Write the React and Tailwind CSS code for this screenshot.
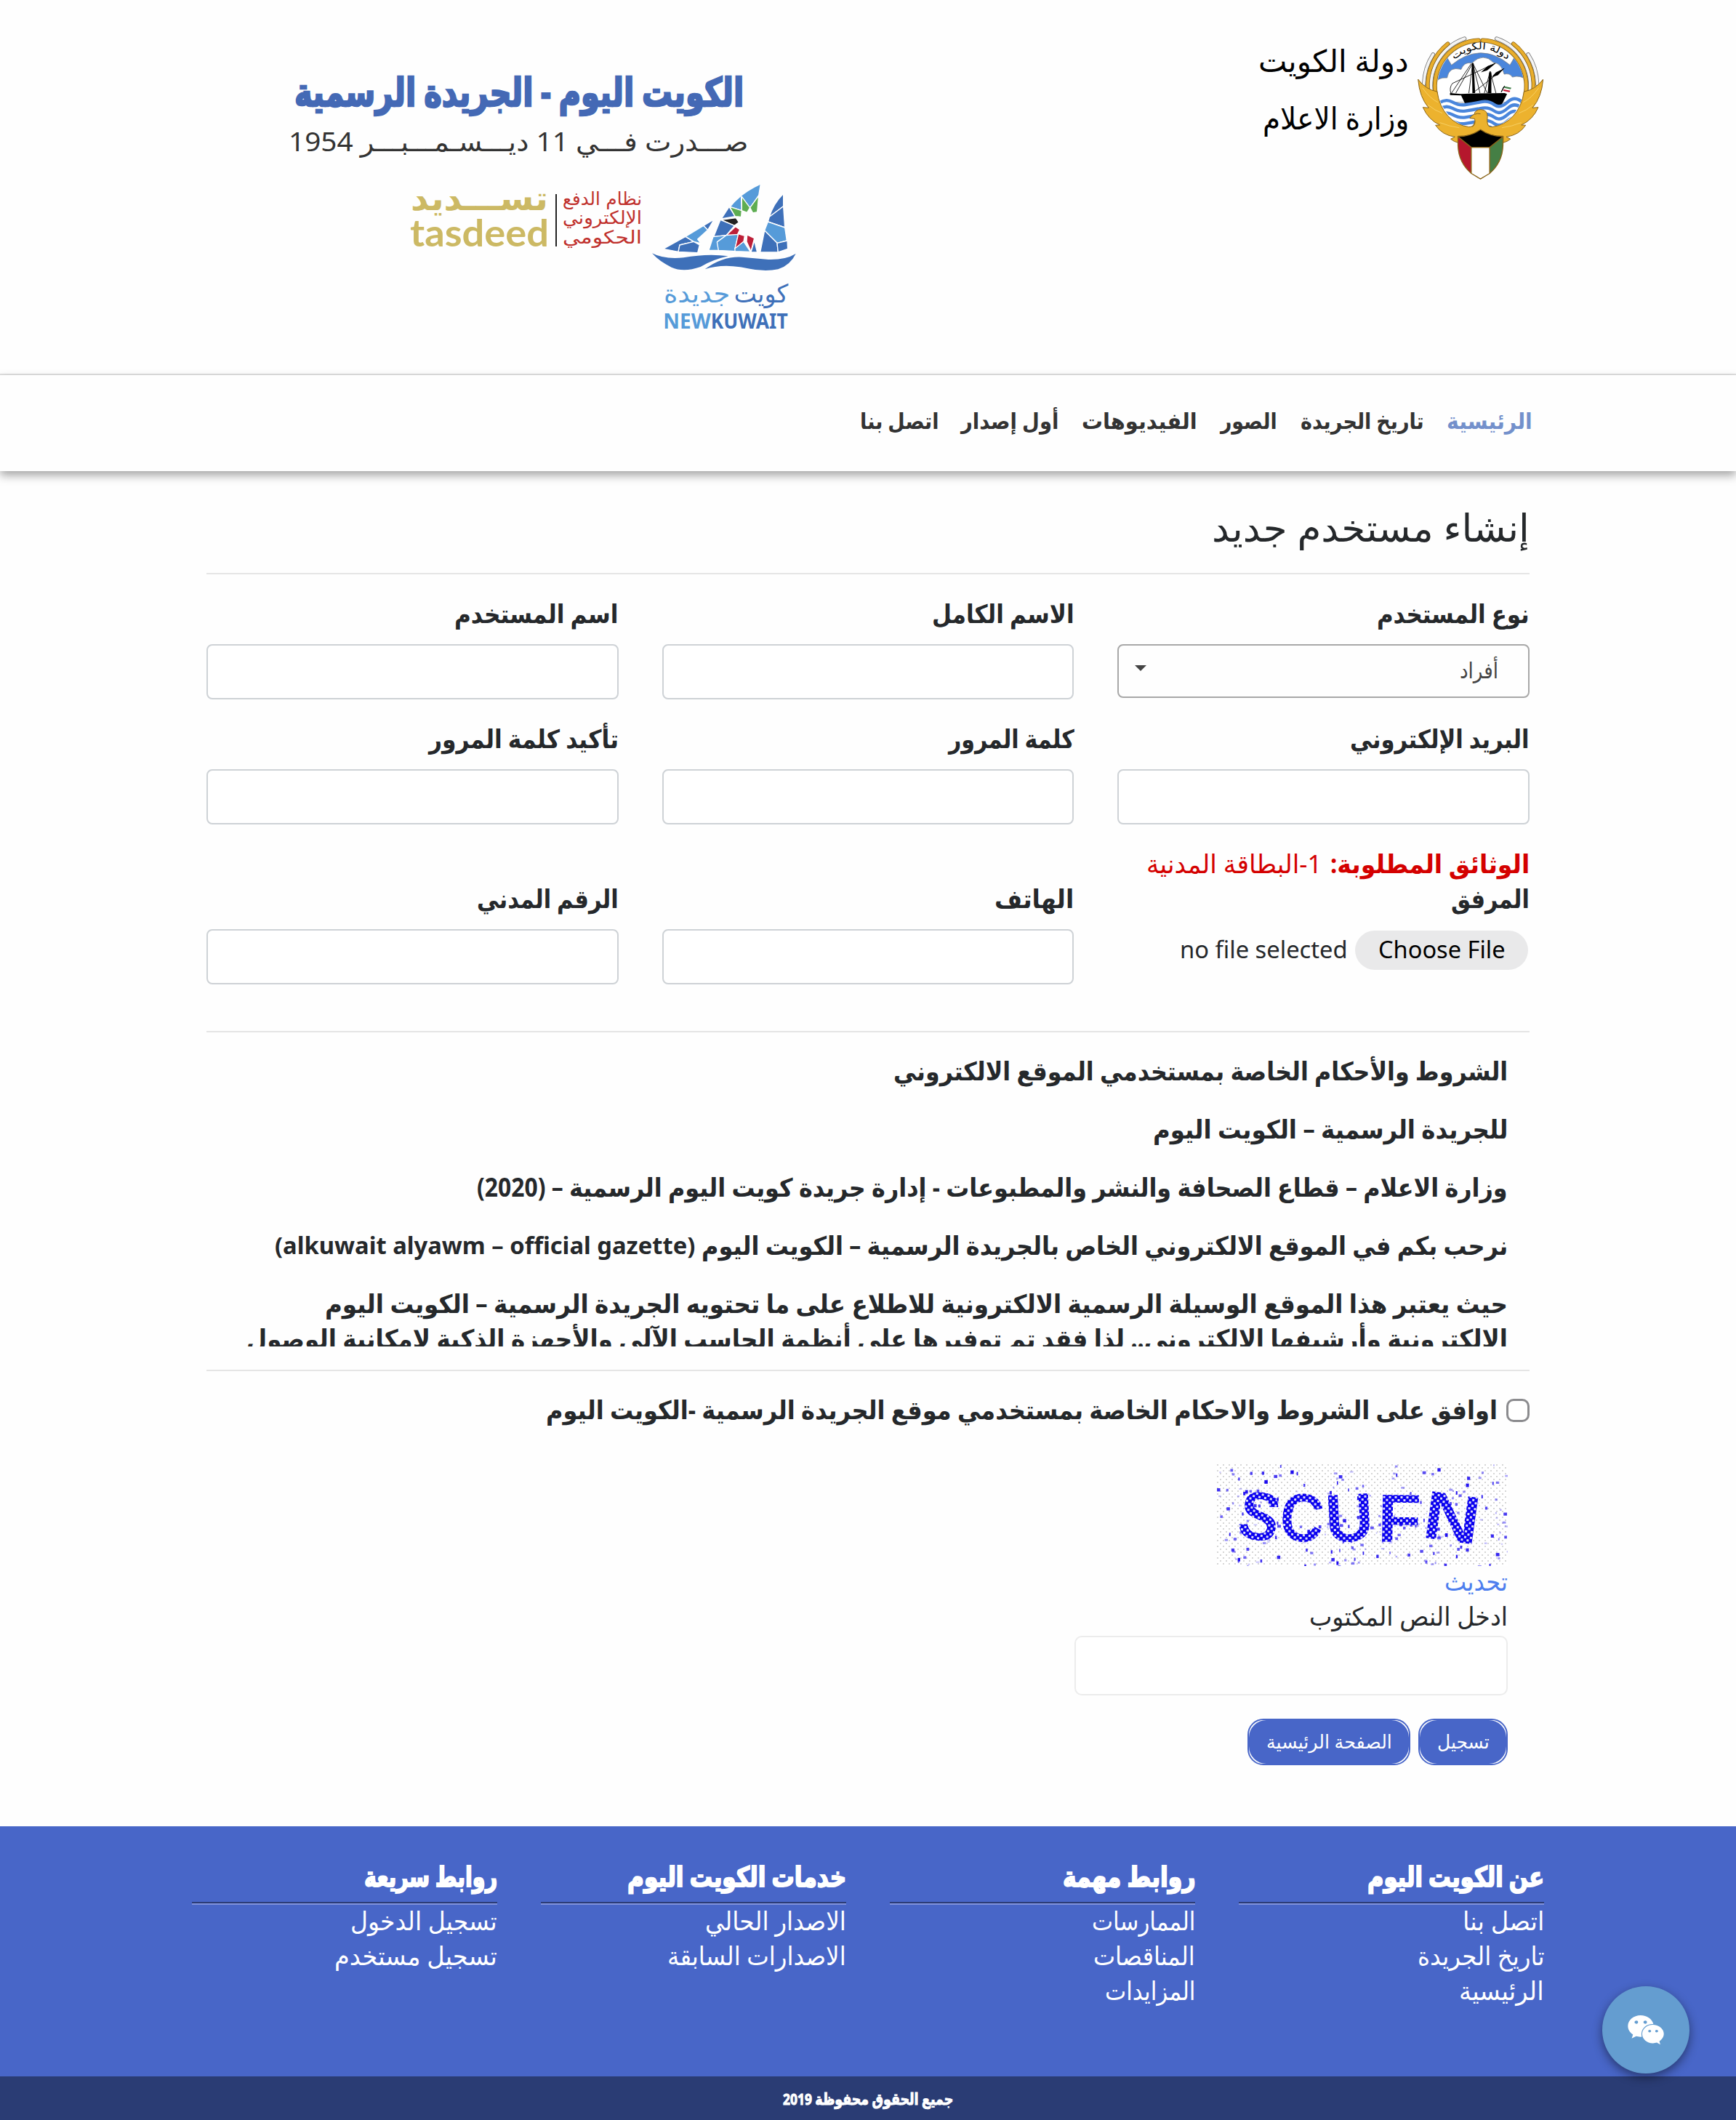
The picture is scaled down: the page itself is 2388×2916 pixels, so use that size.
import { useLayoutEffect, useRef, useState } from "react";
import { FaWeixin } from "react-icons/fa";

// Squeezes or stretches one line of text so it fills the width given in className
function Fit({ className = "", children }) {
  const outer = useRef(null);
  const inner = useRef(null);
  const [scale, setScale] = useState(1);

  useLayoutEffect(() => {
    setScale(outer.current.clientWidth / inner.current.offsetWidth);
  }, [children]);

  return (
    <span ref={outer} className={`inline-flex whitespace-nowrap ${className}`}>
      <span ref={inner} className="inline-block shrink-0 origin-right" style={{ transform: `scaleX(${scale})` }}>
        {children}
      </span>
    </span>
  );
}

const navItems = [
  { label: "الرئيسية", width: "w-[118px]", active: true },
  { label: "تاريخ الجريدة", width: "w-[170px]" },
  { label: "الصور", width: "w-[78px]" },
  { label: "الفيديوهات", width: "w-[159px]" },
  { label: "أول إصدار", width: "w-[134px]" },
  { label: "اتصل بنا", width: "w-[108px]" },
];

const footerColumns = [
  {
    title: "عن الكويت اليوم",
    width: "w-[243px]",
    links: [
      { label: "اتصل بنا", width: "w-[112px]" },
      { label: "تاريخ الجريدة", width: "w-[174px]" },
      { label: "الرئيسية", width: "w-[117px]" },
    ],
  },
  {
    title: "روابط مهمة",
    width: "w-[183px]",
    links: [
      { label: "الممارسات", width: "w-[142px]" },
      { label: "المناقصات", width: "w-[140px]" },
      { label: "المزايدات", width: "w-[124px]" },
    ],
  },
  {
    title: "خدمات الكويت اليوم",
    width: "w-[301px]",
    links: [
      { label: "الاصدار الحالي", width: "w-[194px]" },
      { label: "الاصدارات السابقة", width: "w-[246px]" },
    ],
  },
  {
    title: "روابط سريعة",
    width: "w-[183px]",
    links: [
      { label: "تسجيل الدخول", width: "w-[202px]" },
      { label: "تسجيل مستخدم", width: "w-[224px]" },
    ],
  },
];

const wave = (y) =>
  `M118 ${y} Q146 ${y - 18} 172 ${y - 3} T226 ${y + 8} T288 ${y - 3} T345 ${y + 8} T400 ${y - 3} T462 ${y}`;

function Wing() {
  return (
    <g stroke="#8a6418" strokeWidth="3">
      <g fill="none" strokeLinecap="round">
        <path d="M54 225A236 236 0 0 1 92 102" strokeWidth="16" stroke="#777" />
        <path d="M54 225A236 236 0 0 1 92 102" strokeWidth="11" stroke="#f4f4f4" />
        <path d="M84 250A206 206 0 0 1 222 37" strokeWidth="17" stroke="#777" />
        <path d="M84 250A206 206 0 0 1 222 37" strokeWidth="12" stroke="#f4f4f4" />
        <path d="M70 245A219 219 0 0 1 153 58" strokeWidth="17" />
        <path d="M70 245A219 219 0 0 1 153 58" strokeWidth="12" stroke="#e9ae2c" />
        <path d="M102 262A188 188 0 0 1 280 44" strokeWidth="18" />
        <path d="M102 262A188 188 0 0 1 280 44" strokeWidth="13" stroke="#e9ae2c" />
      </g>
      <path
        d="M30 205Q62 248 109 256Q118 318 153 356Q190 396 240 402Q262 402 264 380L288 380V416Q250 442 195 440V467Q178 463 165 452L182 443Q130 436 102 395L120 394Q72 372 50 321L74 323Q36 280 30 205Z"
        fill="#ecb22e"
      />
      <path d="M48 240Q80 285 112 300M70 310Q100 335 130 345M120 384Q160 400 200 405" fill="none" stroke="#f6cf62" />
    </g>
  );
}

function Emblem() {
  return (
    <svg direction="ltr" viewBox="28 22 520 600" className="h-[200px] w-[173px]">
      <defs>
        <clipPath id="sea">
          <circle cx="289" cy="232" r="179" />
        </clipPath>
      </defs>
      <g clipPath="url(#sea)">
        <rect x="100" y="40" width="380" height="380" fill="#fff" />
        <path d="M100 40H480V215H100Z" fill="#4a86dc" />
        <path
          d="M100 226Q110 195 150 199Q158 150 208 164Q220 132 252 138Q300 92 342 136Q374 138 386 184Q408 178 420 196Q452 186 480 208V300H100Z"
          fill="#fff"
          stroke="#777"
          strokeWidth="2"
        />
        <path d="M122 66L168 146Q289 46 410 146L456 66L400 20H180Z" fill="#fff" stroke="#777" strokeWidth="2" />
        <g stroke="#000" fill="none" strokeWidth="2.5">
          <path d="M172 222L350 138M165 267L250 140M186 262L256 138L240 262M256 138L286 262M256 138V262M256 138L316 262M256 262L386 160M328 172L304 262M328 172L352 262M328 172V262M172 222Q158 240 166 264" />
        </g>
        <path d="M352 138L318 150L290 176L316 168ZM386 160L352 176L334 196L360 188ZM252 140H260L266 262H256ZM324 176H333V262H318Z" fill="#000" />
        <path d="M162 262L206 266Q300 262 388 262L398 266L376 310H226L208 272L162 270Z" fill="#000" />
        <path d="M382 240L388 232L374 258Z" stroke="#000" strokeWidth="3" />
        <path d="M388 234L416 240L412 246L385 240Z" fill="#3f7d48" />
        <path d="M384 247L411 252L408 258L382 253Z" fill="#c8102e" />
        <path d="M118 300Q146 282 172 297T226 308T288 297T345 308T400 297T462 300V420H118Z" fill="#fff" />
        <g fill="none" stroke="#4a86dc" strokeWidth="13">
          <path d={wave(302)} />
          <path d={wave(328)} />
          <path d={wave(354)} />
          <path d={wave(380)} />
          <path d={wave(404)} />
        </g>
      </g>
      <path id="motto" d="M168 134Q289 28 410 134" fill="none" />
      <text fontFamily="DejaVu Sans, sans-serif" fontSize="42" textAnchor="middle">
        <textPath href="#motto" startOffset="50%" textLength="240" lengthAdjust="spacingAndGlyphs">
          دولة الكويت
        </textPath>
      </text>
      <Wing />
      <g transform="translate(577 0) scale(-1 1)">
        <Wing />
      </g>
      <path
        d="M250 404Q270 392 264 368L244 366Q246 358 262 350Q266 330 290 330Q318 332 317 360Q312 392 330 404L288 414Z"
        fill="#ecb22e"
      />
      <path
        d="M254 402Q270 390 264 368L244 366Q246 358 262 350Q266 330 290 330Q318 332 317 360Q312 392 326 402M264 350Q276 344 288 348"
        fill="none"
        stroke="#8a6418"
        strokeWidth="3"
      />
      <g stroke="#8a6418" strokeWidth="4" strokeLinejoin="round">
        <path d="M195 442L250 486V594Q198 550 195 480Z" fill="#b5172d" />
        <path d="M381 442L326 486V594Q378 550 381 480Z" fill="#457f45" />
        <path d="M250 486H326V594L288 617L250 594Z" fill="#fff" />
        <path d="M195 442Q250 440 288 413Q326 440 381 442L326 486H250Z" fill="#000" />
      </g>
    </svg>
  );
}

function NewKuwaitLogo() {
  return (
    <svg direction="ltr" viewBox="20 24 594 600" className="h-[200px] w-[198px] overflow-visible">
      <g stroke="#fff" strokeWidth="4" strokeLinejoin="round">
        {/* left sail */}
        <path d="M66 292L158 241L192 262L134 276L128 304Z" fill="#3e70b9" />
        <path d="M158 241L232 196L250 214L208 252L222 270L192 262Z" fill="#569bd9" />
        <path d="M232 196L276 170L250 214Z" fill="#3e70b9" />
        <path d="M134 276L192 262L216 276L208 308L128 304Z" fill="#3e70b9" />
        {/* middle sail */}
        <path d="M468 24Q388 60 342 118L390 134L388 78L424 124L460 72Z" fill="#569bd9" />
        <path d="M390 76L424 122L412 142L390 134Z" fill="#5ead52" />
        <path d="M460 72L454 140L436 144L424 122Z" fill="#5ead52" />
        <path d="M340 118L390 134L388 160L362 158Z" fill="#5ead52" />
        <path d="M338 118L362 158L306 168Z" fill="#3e70b9" />
        <path d="M306 172L366 164L378 182L360 196Z" fill="#222" />
        <path d="M302 172L360 196L326 236L274 242Z" fill="#3e70b9" />
        <path d="M364 200L382 212L372 234L326 236Z" fill="#bd1f38" />
        <path d="M272 242L326 236L290 262L296 298L254 298Z" fill="#569bd9" />
        <path d="M326 236L376 232L362 290L366 302L294 298L288 264Z" fill="#569bd9" />
        <path d="M376 230L402 238L398 262L362 292Z" fill="#bd1f38" />
        <path d="M398 262L426 304L362 302L362 290Z" fill="#569bd9" />
        <path d="M412 234L442 248L428 302L410 262Z" fill="#bd1f38" />
        <path d="M442 258L454 306H428Z" fill="#3e70b9" />
        {/* right sail */}
        <path d="M562 64Q520 106 504 160L562 116Z" fill="#3e70b9" />
        <path d="M562 116L568 204L498 180L504 160Z" fill="#3e70b9" />
        <path d="M498 180L568 204L576 258L536 268L484 216Z" fill="#569bd9" />
        <path d="M484 216L536 268L540 306L466 306Z" fill="#3e70b9" />
        <path d="M536 268L578 258L580 292L540 306Z" fill="#3e70b9" />
      </g>
      <path d="M20 310Q70 336 150 328Q250 310 334 322Q270 336 220 366Q150 390 100 368Q50 344 20 310Z" fill="#3e70b9" />
      <path d="M238 376Q310 322 390 326Q440 330 500 336Q570 338 613 312Q590 360 540 376Q480 388 400 370Q310 352 238 376Z" fill="#3e70b9" />
      <g fontFamily="DejaVu Sans, sans-serif" fontSize="104">
        <text x="68" y="512" fill="#569bd9" textLength="274" lengthAdjust="spacingAndGlyphs">جديدة</text>
        <text x="358" y="512" fill="#3e70b9" textLength="224" lengthAdjust="spacingAndGlyphs">كويت</text>
      </g>
      <g fontFamily="Noto Sans, sans-serif" fontSize="87" fontWeight="bold">
        <text x="66" y="620" fill="#569bd9" textLength="196" lengthAdjust="spacingAndGlyphs">NEW</text>
        <text x="262" y="620" fill="#3e70b9" textLength="318" lengthAdjust="spacingAndGlyphs">KUWAIT</text>
      </g>
    </svg>
  );
}

function TasdeedLogo() {
  return (
    <svg direction="ltr" viewBox="0 0 320 96" className="h-[96px] w-[320px] overflow-visible">
      <g fill="#ccb964">
        <text x="0" y="36" fontFamily="DejaVu Sans, sans-serif" fontSize="46" fontWeight="bold" textLength="189" lengthAdjust="spacingAndGlyphs">
          تســـديد
        </text>
        <text x="-1" y="86" fontFamily="Lato, sans-serif" fontSize="52" fontWeight="bold" textLength="191" lengthAdjust="spacingAndGlyphs">
          tasdeed
        </text>
      </g>
      <path d="M200 14V86" stroke="#222" strokeWidth="2" />
      <g fill="#c0302c" fontFamily="DejaVu Sans, sans-serif" fontSize="25">
        <text x="209" y="29" textLength="109" lengthAdjust="spacingAndGlyphs">نظام الدفع</text>
        <text x="209" y="55" textLength="109" lengthAdjust="spacingAndGlyphs">الإلكتروني</text>
        <text x="209" y="82" textLength="109" lengthAdjust="spacingAndGlyphs">الحكومي</text>
      </g>
    </svg>
  );
}

// Fixed seed so the noise stays the same on every render
function noise(count) {
  let seed = 17;
  const next = () => (seed = (seed * 16807) % 2147483647) / 2147483647;
  return Array.from({ length: count }, () => ({ x: next() * 400, y: next() * 140, r: next(), o: next() }));
}
const specks = noise(230);

function Captcha() {
  return (
    <svg direction="ltr" viewBox="0 0 400 140" className="h-[140px] w-[400px]">
      <defs>
        <pattern id="dots" width="8" height="8" patternUnits="userSpaceOnUse">
          <rect width="2" height="2" fill="#d6d6d6" />
          <rect x="4" y="4" width="2" height="2" fill="#d6d6d6" />
        </pattern>
        <pattern id="ink" width="8" height="8" patternUnits="userSpaceOnUse">
          <rect width="8" height="8" fill="#0a00f0" />
          <rect width="3" height="3" fill="#dcdcf4" />
          <rect x="4" y="4" width="3" height="3" fill="#dcdcf4" />
        </pattern>
      </defs>
      <rect width="400" height="140" fill="#fff" />
      <rect width="400" height="140" fill="url(#dots)" />
      {specks.map((s, i) => (
        <rect key={i} x={s.x} y={s.y} width={1.5 + s.r * 3.5} height={2 + s.o * 3} fill="#1a08f0" opacity={0.2 + s.o * 0.8} />
      ))}
      <g fill="url(#ink)" fontFamily="Liberation Sans, sans-serif" fontSize="94" fontWeight="bold">
        <text x="30" y="104" textLength="56" lengthAdjust="spacingAndGlyphs" transform="rotate(10 58 74)">S</text>
        <text x="87" y="106" textLength="60" lengthAdjust="spacingAndGlyphs" transform="rotate(5 117 74)">C</text>
        <text x="149" y="106" textLength="66" lengthAdjust="spacingAndGlyphs" transform="rotate(-3 182 74)">U</text>
        <text x="221" y="107" textLength="60" lengthAdjust="spacingAndGlyphs" transform="rotate(1 252 74)">F</text>
        <text x="285" y="106" textLength="78" lengthAdjust="spacingAndGlyphs" transform="rotate(8 324 70)">N</text>
      </g>
    </svg>
  );
}

function Field({ label, width }) {
  return (
    <label className="block">
      <Fit className={`flex h-12 font-bold ${width}`}>{label}</Fit>
      <input className="mt-[18px] block h-[76px] w-full rounded-lg border-2 border-[#ced2d6] bg-white px-6" />
    </label>
  );
}

function Button({ className, children }) {
  return (
    <button className={`h-16 rounded-[22px] border-2 border-[#4866c8] bg-white ${className}`}>
      <span className="flex h-full items-center justify-center rounded-[24px] bg-[#4866c8]">{children}</span>
    </button>
  );
}

export default function App() {
  return (
    <div
      dir="rtl"
      className="relative h-[2916px] w-[2388px] overflow-hidden bg-[#fefefe] font-['Noto_Sans','DejaVu_Sans',sans-serif] text-[35px] leading-[48px] text-[#25282b]"
    >
      {/* Header */}
      <header className="flex h-[516px] justify-between border-b-2 border-[#e1e1e1] pr-[265px] pl-[400px]">
        <div className="flex pt-[48px]">
          <Emblem />
          <div className="mr-3 flex flex-col pt-[8px] text-[42px] text-black">
            <Fit className="h-[79px] w-[207px] leading-[54px]">دولة الكويت</Fit>
            <Fit className="w-[201px] leading-[54px]">وزارة الاعلام</Fit>
          </div>
        </div>
        <div className="flex w-[695px] flex-col pt-[95px]">
          <Fit className="mr-[72px] h-[60px] w-[618px] text-[54px] leading-[60px] font-bold text-[#4469b5] [-webkit-text-stroke:2.5px_#4469b5]">
            الكويت اليوم - الجريدة الرسمية
          </Fit>
          <Fit className="mt-[16px] mr-[66px] w-[632px] text-[36px] text-[#333]">
            صـــدرت فـــي 11 ديـــسـمـــبـــر 1954
          </Fit>
          <div className="mt-[34px] flex gap-3">
            <NewKuwaitLogo />
            <TasdeedLogo />
          </div>
        </div>
      </header>

      {/* Navigation */}
      <nav className="flex h-[132px] gap-[31.6px] pt-[40px] pr-[280px] text-[30.5px] leading-[44px] font-bold text-[#333] shadow-[0_6px_12px_rgba(0,0,0,0.35)]">
        {navItems.map((item) => (
          <a key={item.label} className={item.active ? "text-[#7390cb]" : ""}>
            <Fit className={item.width}>{item.label}</Fit>
          </a>
        ))}
      </nav>

      <main className="mx-[284px] pt-[48px]">
        <h1 className="flex h-[92px] text-[52px] leading-[58px]">
          <Fit className="w-[437px]">إنشاء مستخدم جديد</Fit>
        </h1>
        <hr className="border-t-2 border-[#e5e5e5]" />

        <form className="mt-[30px] grid grid-cols-3 items-end gap-x-[60px] gap-y-[30px]">
          <div className="self-start">
            <Fit className="flex h-12 w-[210px] font-bold">نوع المستخدم</Fit>
            <div className="mt-[18px] flex h-[74px] items-center justify-between rounded-lg border-2 border-[#a8a8a8] pr-[41px] pl-[22px] text-[30px] text-[#444]">
              <Fit className="-mt-[3px] w-[53px]">أفراد</Fit>
              <svg viewBox="0 0 16 8" className="-mt-2 h-2 w-4">
                <path d="M0 0H16L8 8Z" fill="#444" />
              </svg>
            </div>
          </div>
          <Field label="الاسم الكامل" width="w-[196px]" />
          <Field label="اسم المستخدم" width="w-[226px]" />
          <Field label="البريد الإلكتروني" width="w-[247px]" />
          <Field label="كلمة المرور" width="w-[173px]" />
          <Field label="تأكيد كلمة المرور" width="w-[261px]" />
          <div className="h-[190px]">
            <div className="flex h-12 gap-[12px] text-[#d40000]">
              <Fit className="w-[274px] font-bold">الوثائق المطلوبة:</Fit>
              <Fit className="w-[241px]">1-البطاقة المدنية</Fit>
            </div>
            <Fit className="flex h-12 w-[108px] font-bold">المرفق</Fit>
            <div className="mt-[20px] flex items-center gap-[10px] pr-[2px] text-[32px]">
              <button type="button" className="flex h-[54px] w-[238px] items-center justify-center rounded-full bg-[#e9e9ea] pb-[2px] text-black">
                <Fit className="w-[175px]">Choose File</Fit>
              </button>
              <Fit className="-mt-[2px] w-[231px]">no file selected</Fit>
            </div>
          </div>
          <Field label="الهاتف" width="w-[109px]" />
          <Field label="الرقم المدني" width="w-[195px]" />
        </form>

        <hr className="mt-[64px] border-t-2 border-[#e5e5e5]" />

        {/* Terms */}
        <div className="flex h-[432px] flex-col gap-8 overflow-hidden pt-[29px] pr-[30px] font-bold">
          <Fit className="w-[845px]">الشروط والأحكام الخاصة بمستخدمي الموقع الالكتروني</Fit>
          <Fit className="w-[488px]">للجريدة الرسمية – الكويت اليوم</Fit>
          <Fit className="w-[1418px]">
            وزارة الاعلام – قطاع الصحافة والنشر والمطبوعات - إدارة جريدة كويت اليوم الرسمية – (2020)
          </Fit>
          <div className="flex gap-[9px]">
            <Fit className="w-[1109px]">نرحب بكم في الموقع الالكتروني الخاص بالجريدة الرسمية – الكويت اليوم</Fit>
            <Fit className="w-[578px] text-[32px]">(alkuwait alyawm – official gazette)</Fit>
          </div>
          <div className="flex flex-col">
            <Fit className="w-[1627px]">
              حيث يعتبر هذا الموقع الوسيلة الرسمية الالكترونية للاطلاع على ما تحتويه الجريدة الرسمية – الكويت اليوم
            </Fit>
            <Fit className="w-[1735px]">
              الالكترونية وأرشيفها الالكتروني.. لذا فقد تم توفيرها على أنظمة الحاسب الآلي والأجهزة الذكية لامكانية الوصول
            </Fit>
          </div>
        </div>

        <hr className="mt-8 border-t-2 border-[#e5e5e5]" />

        <label className="mt-[30px] flex h-12 gap-3 font-bold">
          <input type="checkbox" className="mt-2 size-8 appearance-none rounded-[10px] border-[3px] border-[#8b8b8e] bg-white" />
          <Fit className="-mt-px w-[1309px]">اوافق على الشروط والاحكام الخاصة بمستخدمي موقع الجريدة الرسمية -الكويت اليوم</Fit>
        </label>

        <div className="mt-[50px] flex flex-col items-start pr-[30px]">
          <Captcha />
          <a className="-mt-[3px] h-12 text-[#4d7eee]">
            <Fit className="w-[87px]">تحديث</Fit>
          </a>
          <Fit className="w-[273px]">ادخل النص المكتوب</Fit>
          <input className="mt-[3px] h-[82px] w-[596px] rounded-[10px] border-2 border-[#ececec] bg-white px-6" />
          <div className="mt-8 flex gap-[11px] text-[26px] text-white">
            <Button className="w-[123px]">
              <Fit className="-mt-[3px] w-[72px]">تسجيل</Fit>
            </Button>
            <Button className="w-[224px]">
              <Fit className="-mt-[3px] w-[173px]">الصفحة الرئيسية</Fit>
            </Button>
          </div>
        </div>
      </main>

      {/* Footer */}
      <footer className="mt-[84px] text-white">
        <div className="grid h-[344px] grid-cols-4 gap-x-[60px] bg-[#4866c8] px-[264px] pt-[44px]">
          {footerColumns.map((col) => (
            <div key={col.title}>
              <h3 className="flex h-[60px] text-[38px] font-bold [-webkit-text-stroke:2px_#fff]">
                <Fit className={col.width}>{col.title}</Fit>
              </h3>
              <div className="h-1 border-t-2 border-b-2 border-t-[#2b3c75] border-b-[#8092dc]" />
              <ul className="-mt-[2px]">
                {col.links.map((link) => (
                  <li key={link.label} className="flex">
                    <Fit className={link.width}>{link.label}</Fit>
                  </li>
                ))}
              </ul>
            </div>
          ))}
        </div>
        <div className="flex h-[60px] items-center justify-center bg-[#2a3c74] text-[22px] font-bold [-webkit-text-stroke:1px_#fff]">
          <Fit className="w-[234px]">جميع الحقوق محفوظة 2019</Fit>
        </div>
      </footer>

      {/* Chat button */}
      <button className="absolute top-[2732px] left-[2204px] flex size-[120px] items-center justify-center rounded-full bg-[#649dd0] text-white shadow-[0_5px_14px_rgba(0,0,0,0.45)]">
        <FaWeixin className="h-[46px] w-[52px]" />
      </button>
    </div>
  );
}
